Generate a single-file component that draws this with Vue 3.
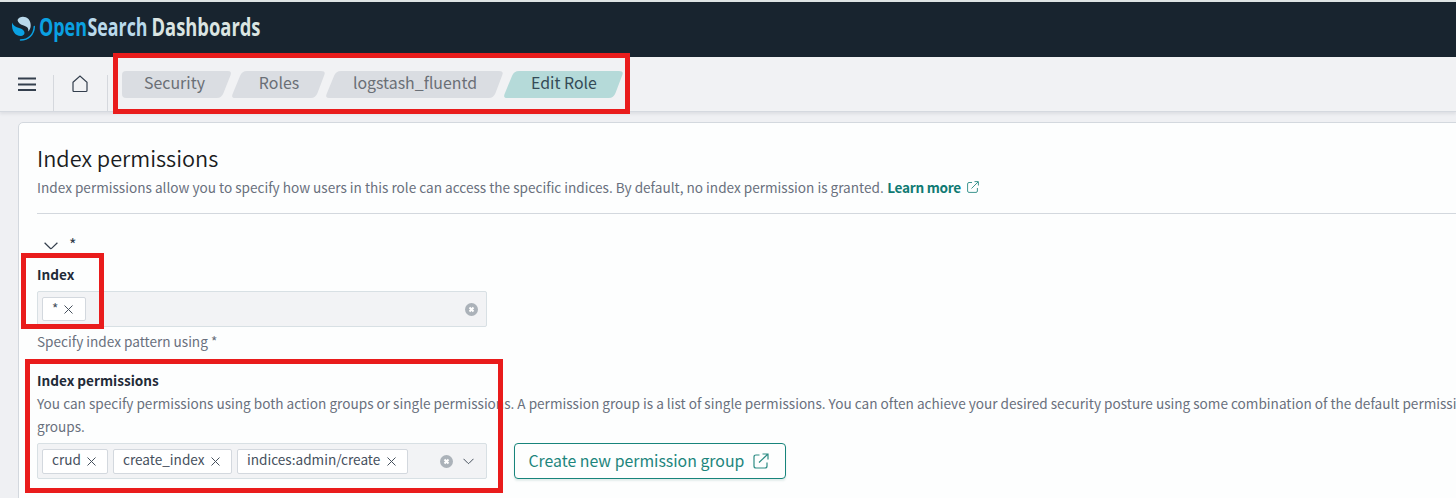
<script setup>
const crumbs = [
  { label: 'Security', w: 110, d: 'M4 0H106Q110 0 108.600 4L101.500 22Q99.500 27 95 27H4Q0 27 0 23V4Q0 0 4 0Z' },
  { label: 'Roles', w: 93, d: 'M15 0H89Q94 0 92.300 4L85.500 22Q83.500 27 79 27H3Q-1 27 .6 23L8 5Q10 0 15 0Z' },
  { label: 'logstash_fluentd', w: 177, d: 'M15 0H173Q178 0 176.300 4L169.500 22Q167.500 27 163 27H3Q-1 27 .6 23L8 5Q10 0 15 0Z' },
  { label: 'Edit Role', w: 119, active: true, d: 'M15 0H115Q120 0 118.300 4L111.500 22Q109.500 27 105 27H3Q-1 27 .6 23L8 5Q10 0 15 0Z' },
]
const permissions = [
  { label: 'crud', w: 66 },
  { label: 'create_index', w: 119 },
  { label: 'indices:admin/create', w: 171 },
]
</script>

<template>
  <div class="page">
    <header class="brand">
      <svg width="270" height="55" viewBox="0 2 270 55">
        <path d="M12 22.500C11.400 31 15 36 21 35.900C25 35.600 25.700 32 22.500 29.500C19.500 27.400 14 28 12 22.500Z" fill="#0aa1e2" />
        <path d="M17.500 20C19.500 16 25 15.800 28.500 19C31.500 22.500 31.500 28.500 28.300 31.500C28.800 27.300 26.500 26.600 23 25.300C20 24.300 18 22.800 17.500 20Z" fill="#b9d9eb" />
        <path d="M34.300 26.500C34 34.500 28.500 40 20.500 40" fill="none" stroke="#0aa1e2" stroke-width="1.500" stroke-linecap="round" />
        <g class="wordmark">
          <text x="39" y="36" textLength="48" lengthAdjust="spacingAndGlyphs" fill="#0aa1e2">Open</text>
          <text x="87.500" y="36" textLength="60" lengthAdjust="spacingAndGlyphs" fill="#b9d9eb">Search</text>
          <text x="151.500" y="36" textLength="109" lengthAdjust="spacingAndGlyphs" fill="#dbe5e2">Dashboards</text>
        </g>
      </svg>
    </header>

    <nav class="bar">
      <div class="cell menu">
        <svg width="18" height="15" viewBox="0 0 18 15"><path d="M0 1.500H18M0 7.500H18M0 13H18" stroke="#343f4d" stroke-width="2.200" /></svg>
      </div>
      <div class="cell home">
        <svg width="16" height="18" viewBox="0 0 16 18"><path d="M1 7.200L8 1L15 7.200V15.500Q15 16.500 14 16.500H2Q1 16.500 1 15.500Z" fill="none" stroke="#343f4d" stroke-width="1.200" /></svg>
      </div>
      <div class="crumbs">
        <span v-for="c in crumbs" :key="c.label" class="crumb" :class="{ active: c.active }" :style="{ width: c.w + 'px' }">
          <svg class="shape" :width="c.w" height="27"><path :d="c.d" /></svg>
          <span class="label">{{ c.label }}</span>
        </span>
      </div>
    </nav>

    <main class="panel">
      <h2>Index permissions</h2>
      <p class="desc"><span>Index permissions allow you to specify how users in this role can access the specific indices. By default, no index permission is granted.</span><a>Learn more</a>
        <svg width="12" height="12" viewBox="0 0 12 12"><path d="M5 1.500H2Q.6 1.500 .6 3V10Q.6 11.400 2 11.400H9Q10.400 11.400 10.400 10V7M4.500 7.500L11 1M7.500 .6H11.400V4.500" fill="none" stroke="#3f9690" /></svg>
      </p>
      <div class="toggle">
        <svg width="14" height="8" viewBox="0 0 14 8"><path d="M.6 .8L6.200 6.200Q7 7 7.800 6.200L13.400 .8" fill="none" stroke="#343f4d" stroke-width="1.200" /></svg>
        <span>*</span>
      </div>
      <label class="title">Index</label>
      <div class="combo">
        <span class="pill star"><span>*</span><svg width="9" height="9" viewBox="0 0 9 9"><path d="M.5 .5L8.500 8.500M8.500 .5L.5 8.500" /></svg></span>
        <svg class="clear last" width="13" height="13" viewBox="0 0 13 13"><circle cx="6.500" cy="6.500" r="6.500" /><path d="M4.500 4.500L8.500 8.500M8.500 4.500L4.500 8.500" /></svg>
      </div>
      <p class="help">Specify index pattern using *</p>
      <label class="title second">Index permissions</label>
      <p class="long">You can specify permissions using both action groups or single permissions. A permission group is a list of single permissions. You can often achieve your desired security posture using some combination of the default permission<br>groups.</p>
      <div class="row">
        <div class="combo">
          <span v-for="p in permissions" :key="p.label" class="pill" :style="{ width: p.w + 'px' }"><span>{{ p.label }}</span><svg width="9" height="9" viewBox="0 0 9 9"><path d="M.5 .5L8.500 8.500M8.500 .5L.5 8.500" /></svg></span>
          <svg class="clear" width="13" height="13" viewBox="0 0 13 13"><circle cx="6.500" cy="6.500" r="6.500" /><path d="M4.500 4.500L8.500 8.500M8.500 4.500L4.500 8.500" /></svg>
          <svg class="caret" width="11" height="7" viewBox="0 0 11 7"><path d="M.5 .8L5 5.300Q5.500 5.800 6 5.300L10.500 .8" /></svg>
        </div>
        <button>
          <span>Create new permission group</span>
          <svg width="16" height="16" viewBox="0 0 16 16"><path d="M6.500 2H3Q1 2 1 4V13Q1 15 3 15H12Q14 15 14 13V9.500M6 9.500L15 1M9.500 1H15V6.500" fill="none" stroke="#2d8c84" stroke-width="1.200" /></svg>
        </button>
      </div>
    </main>

    <div class="mark m1"></div>
    <div class="mark m2"></div>
    <div class="mark m3"></div>
  </div>
</template>

<style>
body { overflow: hidden; }
</style>

<style scoped>
* { box-sizing: border-box; }
.page { position: relative; width: 1456px; height: 498px; overflow: hidden; background: #eff0f3; font-family: "Noto Sans CJK JP", "Noto Sans", sans-serif; font-size: 13.600px; color: #69707d; }
.brand { height: 57px; border-top: 2px solid #dde3e4; background: #18242f; }
.brand svg { display: block; }
.wordmark { font: 700 25px "Open Sans", sans-serif; }
.bar { display: flex; height: 55px; background: #f1f2f4; border-bottom: 1px solid #d5d9df; box-shadow: 0 2px 3px rgba(60, 70, 90, .1); }
.cell { width: 54px; height: 36px; margin-top: 18px; border-right: 1px solid #d5d8dd; }
.cell svg { display: block; }
.menu svg { margin: 2px 0 0 18px; }
.home svg { margin: 0 0 0 18px; }
.crumbs { display: flex; padding: 14px 0 0 14px; }
.crumb { position: relative; display: block; height: 27px; margin-right: 1px; text-align: center; font-size: 15.900px; line-height: 23px; color: #6a6f76; }
.crumb:nth-child(1) { margin-right: 0; padding-right: 5px; }
.crumb:nth-child(n+2) { padding-left: 1px; }
.shape { position: absolute; left: 0; top: 0; overflow: visible; fill: #dadde2; }
.active .shape { fill: #b5dad9; }
.active { color: #344b57; }
.label { position: relative; white-space: nowrap; }
.panel { margin: 10px 0 0 18px; width: 1500px; height: 420px; padding: 22px 0 0 18px; background: #fdfefe; border: 1px solid #d3d8de; border-radius: 5px; white-space: nowrap; }
h2 { margin: 0; font-size: 21.700px; font-weight: 350; line-height: 26px; color: #1a1c21; }
p { margin: 0; }
.desc { display: flex; align-items: center; height: 43px; padding-bottom: 10px; margin-bottom: 20px; border-bottom: 1px solid #d3d8de; }
.desc a { margin: 0 6px 0 3.500px; font-weight: 700; letter-spacing: -.28px; color: #107a73; }
.toggle { display: flex; height: 31px; color: #343f4d; line-height: 20px; }
.toggle svg { margin: 8px 11px 0 7px; }
.toggle span { font-size: 16px; }
.title { display: block; height: 26px; line-height: 19px; font-weight: 700; color: #1f2b38; }
.combo { display: flex; align-items: center; width: 450px; height: 36px; padding-left: 4px; background: #f2f3f5; border: 1px solid #d8e0e4; border-radius: 2px; }
.pill { display: flex; align-items: center; justify-content: space-between; height: 25px; margin-right: 5px; padding: 0 11px 0 9px; background: #fff; border: 1px solid #d3d8de; border-radius: 2px; line-height: 22px; color: #46505d; }
.pill.star { width: 44px; height: 24px; padding-right: 12px; }
.pill path, .caret path { fill: none; stroke: #46505d; stroke-width: 1; }
.pill > span { position: relative; top: -2px; }
.pill.star > span { top: -1px; }
.clear { margin-left: auto; fill: #abb2b9; }
.clear path { stroke: #fff; stroke-width: 2; }
.last { margin-right: 8px; }
.caret { margin: 0 12px 0 10px; }
.help { height: 43px; line-height: 29px; }
.title.second { height: 22px; line-height: 20px; }
.long { line-height: 23px; height: 51px; }
.row { display: flex; gap: 27px; }
button { display: flex; align-items: center; gap: 9px; width: 272px; height: 36px; padding: 0 0 1px 13.500px; font-family: inherit; font-size: 15.850px; line-height: 24px; color: #1c857c; background: #fdfefe; border: 1px solid #17847b; border-radius: 4px; box-shadow: 0 2px 2px rgba(0, 90, 80, .1); white-space: nowrap; }
.mark { position: absolute; border: 5px solid #e91c1c; }
.m1 { left: 113px; top: 53px; width: 517px; height: 61px; }
.m2 { left: 21px; top: 253px; width: 83px; height: 76px; }
.m3 { left: 25px; top: 359px; width: 478px; height: 134px; }
</style>
